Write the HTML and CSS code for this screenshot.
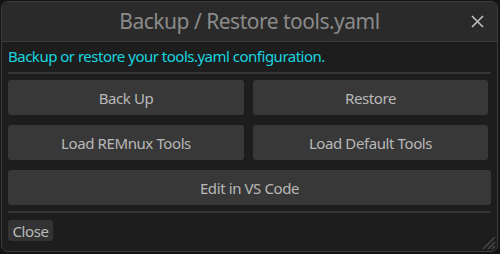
FILE: index.html
```html
<!DOCTYPE html>
<html>
<head>
<meta charset="utf-8">
<link rel="stylesheet" href="styles.css">
</head>
<body>
<div class="window">
  <div class="titlebar">
    <span></span>
    <span class="title">Backup / Restore tools.yaml</span>
    <span class="close-x">
      <svg width="13" height="13" viewBox="0 0 13 13"><path d="M1 1 L12 12 M12 1 L1 12" stroke="#c4c4c4" stroke-width="1.5" fill="none"/></svg>
    </span>
  </div>
  <div class="content">
    <div class="subtitle">Backup or restore your tools.yaml configuration.</div>
    <div class="sep"></div>
    <div class="grid">
      <div class="btn">Back Up</div>
      <div class="btn">Restore</div>
      <div class="btn">Load REMnux Tools</div>
      <div class="btn">Load Default Tools</div>
      <div class="btn full">Edit in VS Code</div>
    </div>
    <div class="sep sep2"></div>
    <div class="footer"><div class="small-btn">Close</div></div>
  </div>
  <svg class="grip" width="16" height="16" viewBox="0 0 16 16"><path d="M15 3 L3 15 M15 8 L8 15 M15 12 L12 15" stroke="#4a4a4a" stroke-width="1.4" fill="none"/></svg>
</div>
</body>
</html>
```
FILE: styles.css
```css
html, body {
  margin: 0;
  padding: 0;
  background: #141414;
  width: 500px;
  height: 254px;
  overflow: hidden;
  font-family: "Noto Sans", "DejaVu Sans", sans-serif;
}
.window {
  position: relative;
  margin: 1px 0 0 1px;
  width: 495px;
  height: 249px;
  border: 1px solid #3c3c3c;
  border-radius: 7px;
  background: #1d1d1d;
  overflow: hidden;
}
.titlebar {
  height: 39px;
  background: #2a2a2a;
  border-bottom: 1px solid #3a3a3a;
  display: grid;
  grid-template-columns: 1fr auto 1fr;
  align-items: center;
}
.title {
  color: #8a8a8a;
  font-size: 21px;
  letter-spacing: -0.5px;
  line-height: 24px;
  padding-bottom: 2px;
}
.close-x {
  justify-self: end;
  margin-right: 13px;
  display: flex;
}
.content {
  padding: 0 6px;
  display: flex;
  flex-direction: column;
}
.subtitle {
  color: #16d6e0;
  font-size: 15px;
  letter-spacing: -0.5px;
  line-height: 18px;
  margin-top: 5px;
}
.sep {
  height: 2px;
  background: #353535;
  width: 483px;
  margin-top: 7px;
}
.grid {
  display: grid;
  grid-template-columns: 236px 235px;
  column-gap: 9px;
  row-gap: 10px;
  margin-top: 6px;
}
.btn {
  height: 35px;
  background: #383838;
  border-radius: 3px;
  color: #b8b8b8;
  font-size: 15px;
  letter-spacing: -0.4px;
  display: flex;
  align-items: center;
  justify-content: center;
}
.full {
  grid-column: 1 / 3;
  width: 483px;
}
.sep2 {
  margin-top: 6px;
}
.footer {
  margin-top: 7px;
  display: flex;
}
.small-btn {
  width: 45px;
  height: 21px;
  background: #333333;
  border-radius: 3px;
  color: #bababa;
  font-size: 15px;
  letter-spacing: -0.4px;
  display: flex;
  align-items: center;
  justify-content: center;
}
.grip {
  position: absolute;
  right: 1px;
  bottom: 1px;
}
```
